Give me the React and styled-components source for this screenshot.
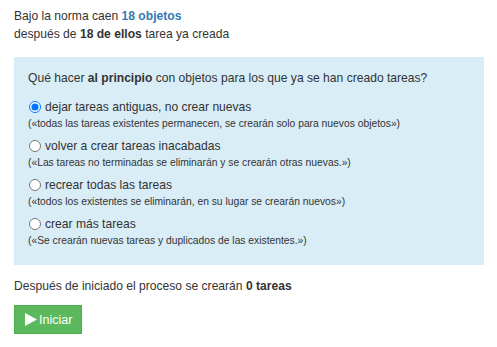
import React, { useState } from 'react';
import styled, { createGlobalStyle } from 'styled-components';

const GlobalStyle = createGlobalStyle`
  body {
    margin: 0;
    background: #fff;
    font-family: "Liberation Sans", Arial, sans-serif;
    color: #333;
  }
`;

const Page = styled.div`
  padding: 7px 14px;
  width: 470px;
`;

const Line = styled.div`
  font-size: 12.1px;
  line-height: 18px;
`;

const Accent = styled.b`
  color: #337ab7;
`;

const InfoBox = styled.div`
  background-color: #d9edf7;
  margin-top: 14px;
  padding: 11px 14px 17px;
`;

const Question = styled.div`
  font-size: 12.1px;
  line-height: 20px;
  margin-bottom: 9px;
`;

const OptionBlock = styled.div`
  margin-bottom: 5px;

  &:last-child {
    margin-bottom: 0;
  }
`;

const OptionLabel = styled.label`
  display: flex;
  align-items: center;
  font-size: 12.1px;
  line-height: 20px;
  height: 20px;
  cursor: pointer;
`;

const Radio = styled.input`
  width: 12px;
  height: 12px;
  margin: 0 4px 0 1px;
`;

const Hint = styled.div`
  font-size: 10.3px;
  line-height: 14px;
`;

const Summary = styled(Line)`
  margin-top: 12px;
`;

const StartButton = styled.button`
  display: flex;
  align-items: center;
  gap: 2px;
  margin-top: 10px;
  height: 29px;
  width: 68px;
  padding: 0 0 0 10px;
  background-color: #5cb85c;
  border: 1px solid #4cae4c;
  border-radius: 0;
  color: #fff;
  font-family: inherit;
  font-size: 12.5px;
  cursor: pointer;
`;

const options = [
  {
    id: 'keep',
    label: 'dejar tareas antiguas, no crear nuevas',
    hint: '(«todas las tareas existentes permanecen, se crearán solo para nuevos objetos»)',
  },
  {
    id: 'redo',
    label: 'volver a crear tareas inacabadas',
    hint: '(«Las tareas no terminadas se eliminarán y se crearán otras nuevas.»)',
  },
  {
    id: 'all',
    label: 'recrear todas las tareas',
    hint: '(«todos los existentes se eliminarán, en su lugar se crearán nuevos»)',
  },
  {
    id: 'more',
    label: 'crear más tareas',
    hint: '(«Se crearán nuevas tareas y duplicados de las existentes.»)',
  },
];

const App = () => {
  const [mode, setMode] = useState('keep');

  return (
    <Page>
      <GlobalStyle />
      <Line>
        Bajo la norma caen <Accent>18 objetos</Accent>
      </Line>
      <Line>
        después de <b>18 de ellos</b> tarea ya creada
      </Line>
      <InfoBox>
        <Question>
          Qué hacer <b>al principio</b> con objetos para los que ya se han creado tareas?
        </Question>
        {options.map(option => (
          <OptionBlock key={option.id}>
            <OptionLabel>
              <Radio
                type="radio"
                name="mode"
                checked={mode === option.id}
                onChange={() => setMode(option.id)}
              />
              {option.label}
            </OptionLabel>
            <Hint>{option.hint}</Hint>
          </OptionBlock>
        ))}
      </InfoBox>
      <Summary>
        Después de iniciado el proceso se crearán <b>0 tareas</b>
      </Summary>
      <StartButton type="button">
        <svg width="12" height="13" viewBox="0 0 12 13">
          <polygon points="0,0 12,6.5 0,13" fill="#fff" />
        </svg>
        Iniciar
      </StartButton>
    </Page>
  );
};

export default App;
